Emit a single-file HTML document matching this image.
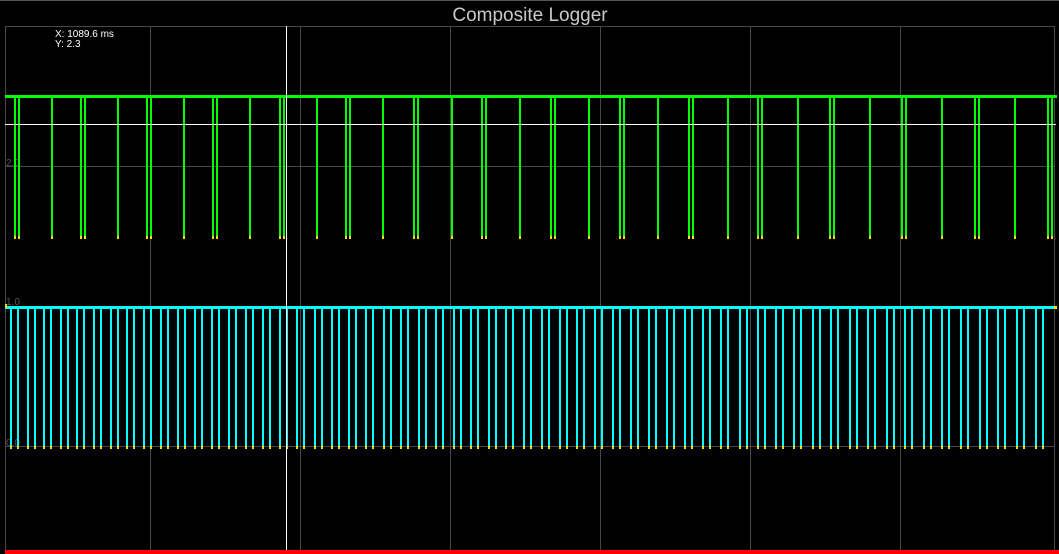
<!DOCTYPE html><html><head><style>
html,body{margin:0;padding:0;background:#000;width:1059px;height:554px;overflow:hidden}
svg{display:block}
</style></head><body>
<svg id="s" width="1059" height="554" xmlns="http://www.w3.org/2000/svg" shape-rendering="crispEdges">
<rect width="1059" height="554" fill="#000"/>
<line x1="0" y1="0.5" x2="1059" y2="0.5" stroke="#555"/>
<g id="grid" stroke="#484848" stroke-width="1"></g>
<text x="530" y="21" fill="#c8c8c8" font-family="Liberation Sans, sans-serif" font-size="19" text-anchor="middle">Composite Logger</text>
<text x="55" y="37" fill="#fff" font-family="Liberation Sans, sans-serif" font-size="10">X: 1089.6 ms</text>
<text x="55" y="47" fill="#fff" font-family="Liberation Sans, sans-serif" font-size="10">Y: 2.3</text>
<text x="6" y="166" fill="#555" font-family="Liberation Sans, sans-serif" font-size="10">2.0</text>
<text x="6" y="305" fill="#555" font-family="Liberation Sans, sans-serif" font-size="10">1.0</text>
<text x="6" y="446" fill="#555" font-family="Liberation Sans, sans-serif" font-size="10">0.0</text>
<g id="g"></g>
<g id="c"></g>
<line x1="5" y1="124.5" x2="1056" y2="124.5" stroke="#fff" stroke-width="1"/>
<line x1="286.5" y1="26" x2="286.5" y2="554" stroke="#fff" stroke-width="1"/>
<rect x="5" y="550" width="1054" height="4" fill="#f00"/>
</svg>
<script>
var NS="http://www.w3.org/2000/svg";
function el(p,t,a){var e=document.createElementNS(NS,t);for(var k in a)e.setAttribute(k,a[k]);p.appendChild(e);return e;}
var grid=document.getElementById('grid');
[5,150,300,450,600,750,900,1054].forEach(function(x){el(grid,'line',{x1:x+.5,y1:26,x2:x+.5,y2:554});});
[26,166,306,446].forEach(function(y){el(grid,'line',{x1:5,y1:y+.5,x2:1055,y2:y+.5});});
var g=document.getElementById('g');
el(g,'rect',{x:5,y:95,width:1052,height:3,fill:'#00ff00'});
var pairs=[15,81,147,213,280,346,414,482,551,620,689,758,830,902,975,1048];
var singles=[52,118,184,250,317,383,452,520,589,658,728,798,870,942,1015];
var gx=[];pairs.forEach(function(p){gx.push(p,p+4);});gx=gx.concat(singles);
gx.forEach(function(x){el(g,'rect',{x:x-1,y:96,width:2,height:141,fill:'#00ff00'});el(g,'rect',{x:x-1,y:236,width:2,height:3,fill:'#ffe000'});});
var c=document.getElementById('c');
el(c,'rect',{x:5,y:306,width:1052,height:3,fill:'#00ffff'});
el(c,'rect',{x:5,y:304,width:2,height:4,fill:'#ffe000'});
el(c,'rect',{x:1054,y:306,width:3,height:3,fill:'#ffe000'});
for(var i=0;i<59;i++){var p=Math.round(11+16.5*i+0.0202*i*i);[p,p+7].forEach(function(x){
el(c,'rect',{x:x-1,y:307,width:2,height:139,fill:'#00ffff'});el(c,'rect',{x:x-1,y:446,width:2,height:3,fill:'#ffe000'});});}
</script>
</body></html>
